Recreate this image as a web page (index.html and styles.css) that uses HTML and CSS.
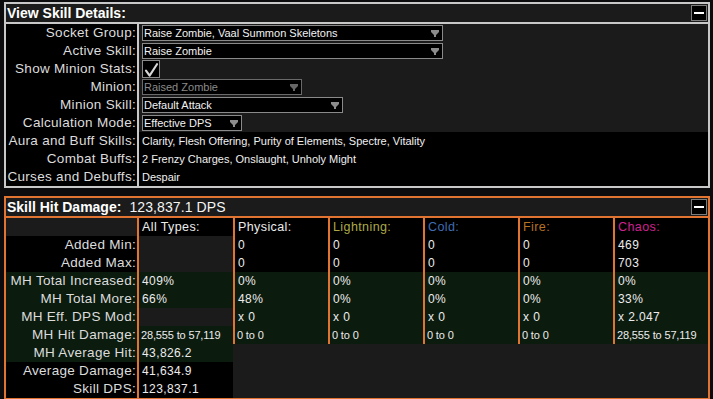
FILE: index.html
```html
<!DOCTYPE html>
<html>
<head>
<meta charset="utf-8">
<title>Skill Details</title>
<link rel="stylesheet" href="styles.css">
</head>
<body>
<div class="page">
  <section class="panel panel-gray">
    <div class="ptitle ptitle-gray">
      <span class="tt">View Skill Details:</span>
      <span class="minbtn"><span class="dash"></span></span>
    </div>
    <div class="details">
      <div class="lab">Socket Group:</div>
      <div class="val gray"><div class="dd w300"><span>Raise Zombie, Vaal Summon Skeletons</span><svg class="arr" viewBox="0 0 8 7"><polygon points="0,0 8,0 8,2 5,5 5,7 3,7 3,5 0,2"/></svg></div></div>

      <div class="lab">Active Skill:</div>
      <div class="val gray"><div class="dd w300"><span>Raise Zombie</span><svg class="arr" viewBox="0 0 8 7"><polygon points="0,0 8,0 8,2 5,5 5,7 3,7 3,5 0,2"/></svg></div></div>

      <div class="lab">Show Minion Stats:</div>
      <div class="val gray"><div class="chk"><svg viewBox="0 0 16 16"><path d="M3 9.6 L6.6 14.6 L14 3.2" /></svg></div></div>

      <div class="lab">Minion:</div>
      <div class="val gray"><div class="dd w160 dis"><span>Raised Zombie</span><svg class="arr" viewBox="0 0 8 7"><polygon points="0,0 8,0 8,2 5,5 5,7 3,7 3,5 0,2"/></svg></div></div>

      <div class="lab">Minion Skill:</div>
      <div class="val gray"><div class="dd w200"><span>Default Attack</span><svg class="arr" viewBox="0 0 8 7"><polygon points="0,0 8,0 8,2 5,5 5,7 3,7 3,5 0,2"/></svg></div></div>

      <div class="lab">Calculation Mode:</div>
      <div class="val gray"><div class="dd w100"><span>Effective DPS</span><svg class="arr" viewBox="0 0 8 7"><polygon points="0,0 8,0 8,2 5,5 5,7 3,7 3,5 0,2"/></svg></div></div>

      <div class="lab">Aura and Buff Skills:</div>
      <div class="val txt">Clarity, Flesh Offering, Purity of Elements, Spectre, Vitality</div>

      <div class="lab">Combat Buffs:</div>
      <div class="val txt">2 Frenzy Charges, Onslaught, Unholy Might</div>

      <div class="lab">Curses and Debuffs:</div>
      <div class="val txt">Despair</div>
    </div>
  </section>

  <section class="panel panel-orange">
    <div class="ptitle ptitle-orange">
      <span class="tt">Skill Hit Damage:</span><span class="tv">123,837.1 DPS</span>
      <span class="minbtn"><span class="dash"></span></span>
    </div>
    <div class="calc">
      <div class="lab bg-gray"></div>
      <div class="cell hd bg-blk">All Types:</div>
      <div class="cell hd bg-blk">Physical:</div>
      <div class="cell hd bg-blk c-light">Lightning:</div>
      <div class="cell hd bg-blk c-cold">Cold:</div>
      <div class="cell hd bg-blk c-fire">Fire:</div>
      <div class="cell hd bg-blk c-chaos">Chaos:</div>

      <div class="lab bg-blk">Added Min:</div>
      <div class="cell bg-gray"></div>
      <div class="cell num bg-blk">0</div>
      <div class="cell num bg-blk">0</div>
      <div class="cell num bg-blk">0</div>
      <div class="cell num bg-blk">0</div>
      <div class="cell num bg-blk">469</div>

      <div class="lab bg-blk">Added Max:</div>
      <div class="cell bg-gray"></div>
      <div class="cell num bg-blk">0</div>
      <div class="cell num bg-blk">0</div>
      <div class="cell num bg-blk">0</div>
      <div class="cell num bg-blk">0</div>
      <div class="cell num bg-blk">703</div>

      <div class="lab bg-grn">MH Total Increased:</div>
      <div class="cell num bg-grn">409%</div>
      <div class="cell num bg-grn">0%</div>
      <div class="cell num bg-grn">0%</div>
      <div class="cell num bg-grn">0%</div>
      <div class="cell num bg-grn">0%</div>
      <div class="cell num bg-grn">0%</div>

      <div class="lab bg-grn">MH Total More:</div>
      <div class="cell num bg-grn">66%</div>
      <div class="cell num bg-grn">48%</div>
      <div class="cell num bg-grn">0%</div>
      <div class="cell num bg-grn">0%</div>
      <div class="cell num bg-grn">0%</div>
      <div class="cell num bg-grn">33%</div>

      <div class="lab bg-grn">MH Eff. DPS Mod:</div>
      <div class="cell bg-gray"></div>
      <div class="cell num bg-grn">x&nbsp;0</div>
      <div class="cell num bg-grn">x&nbsp;0</div>
      <div class="cell num bg-grn">x&nbsp;0</div>
      <div class="cell num bg-grn">x&nbsp;0</div>
      <div class="cell num bg-grn">x&nbsp;2.047</div>

      <div class="lab bg-grn">MH Hit Damage:</div>
      <div class="cell sm bg-grn">28,555 to 57,119</div>
      <div class="cell sm bg-grn">0 to 0</div>
      <div class="cell sm bg-grn">0 to 0</div>
      <div class="cell sm bg-grn">0 to 0</div>
      <div class="cell sm bg-grn">0 to 0</div>
      <div class="cell sm bg-grn">28,555 to 57,119</div>

      <div class="lab bg-grn">MH Average Hit:</div>
      <div class="cell num bg-grn">43,826.2</div>
      <div class="rest"></div>

      <div class="lab bg-blk">Average Damage:</div>
      <div class="cell num bg-blk">41,634.9</div>

      <div class="lab bg-blk">Skill DPS:</div>
      <div class="cell num bg-blk">123,837.1</div>
    </div>
  </section>
</div>
</body>
</html>
```

FILE: styles.css
```css
html, body {
  margin: 0;
  padding: 0;
  background: #0c0c0f;
  font-family: "Liberation Sans", Arial, sans-serif;
  color: #e8e8e8;
}

.page {
  width: 713px;
  height: 399px;
  overflow: hidden;
  box-sizing: border-box;
  padding: 2px 3px 0 4px;
  display: flex;
  flex-direction: column;
  gap: 8px;
}

.panel {
  width: 706px;
  box-sizing: border-box;
  flex: none;
}

.panel-gray { border: 2px solid #c8c8c8; }
.panel-orange { border: 2px solid #e07430; }

.ptitle {
  height: 18px;
  background: #1b1b1b;
  display: flex;
  align-items: center;
  padding-left: 1px;
  line-height: 18px;
}
.ptitle-gray { border-bottom: 2px solid #c8c8c8; }
.ptitle-orange { border-bottom: 2px solid #e07430; }

.tt {
  font-weight: bold;
  font-size: 14px;
  color: #ffffff;
}
.tv {
  font-size: 14px;
  color: #f4f4f4;
  margin-left: 8px;
  letter-spacing: 0.1px;
}

.minbtn {
  margin-left: auto;
  margin-right: 1px;
  width: 16px;
  height: 16px;
  box-sizing: border-box;
  border: 1px solid #7c7c7c;
  background: #000;
  display: flex;
  align-items: center;
  justify-content: center;
}
.dash {
  width: 10px;
  height: 2px;
  background: #ffffff;
}

/* top details grid */
.details {
  display: grid;
  grid-template-columns: 131px 571px;
  grid-auto-rows: 18px;
}

.lab {
  background: #000;
  text-align: right;
  font-size: 13.5px;
  letter-spacing: 0.3px;
  line-height: 18px;
  padding-right: 1px;
  color: #dcdcdc;
  white-space: nowrap;
  overflow: hidden;
}

.val {
  border-left: 2px solid #c8c8c8;
  display: flex;
  align-items: flex-start;
  padding-left: 3px;
}
.val.gray { background: #1b1b1b; }
.val.txt {
  background: #000;
  font-size: 11px;
  line-height: 18px;
  color: #f0f0f0;
  white-space: nowrap;
}

.dd {
  height: 16px;
  margin-top: 1px;
  box-sizing: border-box;
  border: 1px solid #8a8a8a;
  background: #000;
  display: flex;
  align-items: center;
  justify-content: space-between;
  padding: 0 3px 0 1px;
  font-size: 11px;
  color: #f2f2f2;
  white-space: nowrap;
}
.dd.w300 { width: 301px; }
.dd.w200 { width: 201px; }
.dd.w160 { width: 160px; }
.dd.w100 { width: 100px; }
.dd.dis { color: #8a8a8a; border-color: #6a6a6a; }
.arr { width: 8px; height: 7px; fill: #8c8c8c; flex: none; }
.dd.dis .arr { fill: #666666; }

.chk {
  width: 18px;
  height: 18px;
  box-sizing: border-box;
  border: 1px solid #8a8a8a;
  background: #000;
}
.chk svg {
  display: block;
  width: 16px;
  height: 16px;
  fill: none;
  stroke: #d8d8d8;
  stroke-width: 2.1;
  stroke-linecap: round;
  stroke-linejoin: round;
}

/* calc grid */
.calc {
  display: grid;
  grid-template-columns: 131px 96px repeat(5, 95px);
  grid-template-rows: repeat(10, 18px);
}

.cell {
  border-left: 2px solid #e07430;
  padding-left: 3px;
  line-height: 18px;
  white-space: nowrap;
  overflow: hidden;
  color: #ececec;
}
.hd { font-size: 12.5px; letter-spacing: 0.4px; }
.num { font-size: 12px; letter-spacing: 0.4px; }
.sm { font-size: 11px; letter-spacing: -0.15px; padding-left: 2px; }

.bg-blk { background: #000; }
.bg-gray { background: #1b1b1b; }
.bg-grn { background: #0b1b0e; }

.c-light { color: #adaa47; }
.c-cold { color: #3f6db3; }
.c-fire { color: #b97123; }
.c-chaos { color: #d02090; }

.rest {
  grid-column: 3 / -1;
  grid-row: 8 / 11;
  background: #1b1b1b;
}
```
